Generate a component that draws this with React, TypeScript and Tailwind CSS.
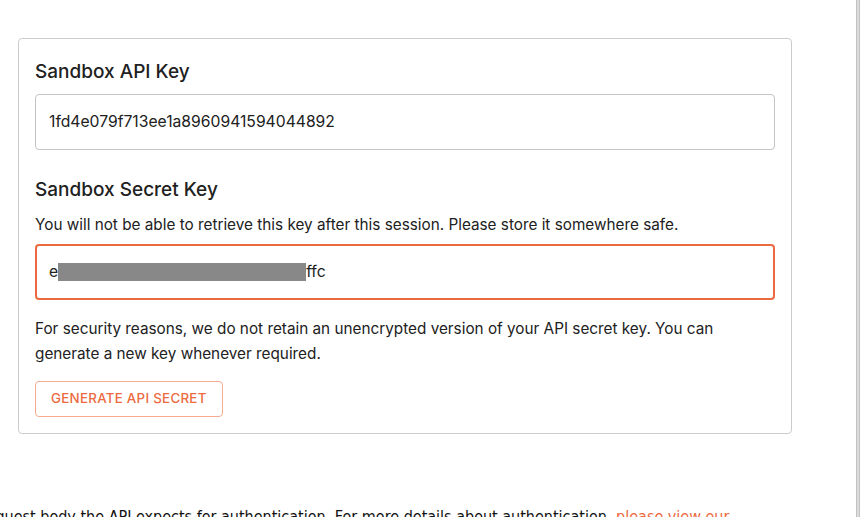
export default function App() {
  const font = { fontFamily: "Inter, 'Helvetica Neue', Arial, sans-serif" }
  return (
    <div className="flex h-[517px] w-[860px] overflow-hidden bg-white text-[#212121]" style={font}>
      <div className="flex-1 overflow-hidden">
        <div className="ml-[18px] mt-[38px] w-[774px] rounded-[4px] border border-[#cccccc] px-[16px] pt-[19px] pb-[16px]">
          <h2 className="text-[19px] font-medium leading-[28px]">Sandbox API Key</h2>
          <div className="mt-[8px] flex h-[56px] items-center rounded-[4px] border border-[#c4c4c4] px-[13px] text-[15.7px]">
            1fd4e079f713ee1a8960941594044892
          </div>

          <h2 className="mt-[26px] text-[19px] font-medium leading-[28px]">Sandbox Secret Key</h2>
          <p className="mt-[9px] text-[15.3px] leading-[24px]">
            You will not be able to retrieve this key after this session. Please store it somewhere safe.
          </p>
          <div className="mt-[7px] flex h-[56px] items-center rounded-[4px] border-2 border-[#ec6a41] px-[12px] text-[15.7px]">
            <span>e</span>
            <span className="inline-block h-[18px] w-[248px] bg-[#888888]" />
            <span>ffc</span>
          </div>

          <p className="mt-[16px] text-[15.3px] leading-[25px]">
            For security reasons, we do not retain an unencrypted version of your API secret key. You can
            <br />
            generate a new key whenever required.
          </p>

          <button className="mt-[15px] h-[36px] rounded-[4px] border border-[#f4ab91] px-[15px] text-[13.3px] font-medium tracking-[0.3px] text-[#ec6a41]">
            GENERATE API SECRET
          </button>
        </div>

        <p
          className="-ml-[19px] mt-[71px] whitespace-nowrap text-[16px] leading-[24px] text-[#111]"
          style={{ fontFamily: "'DejaVu Sans Condensed', 'Liberation Sans Narrow', sans-serif" }}
        >
          request body the API expects for authentication. For more details about authentication,{" "}
          <span className="text-[#ec6a41]">please view our</span>
        </p>
      </div>
      <div className="w-[4px] border-x border-[#c2c2c2] bg-[#dcdcdc]" />
    </div>
  )
}
